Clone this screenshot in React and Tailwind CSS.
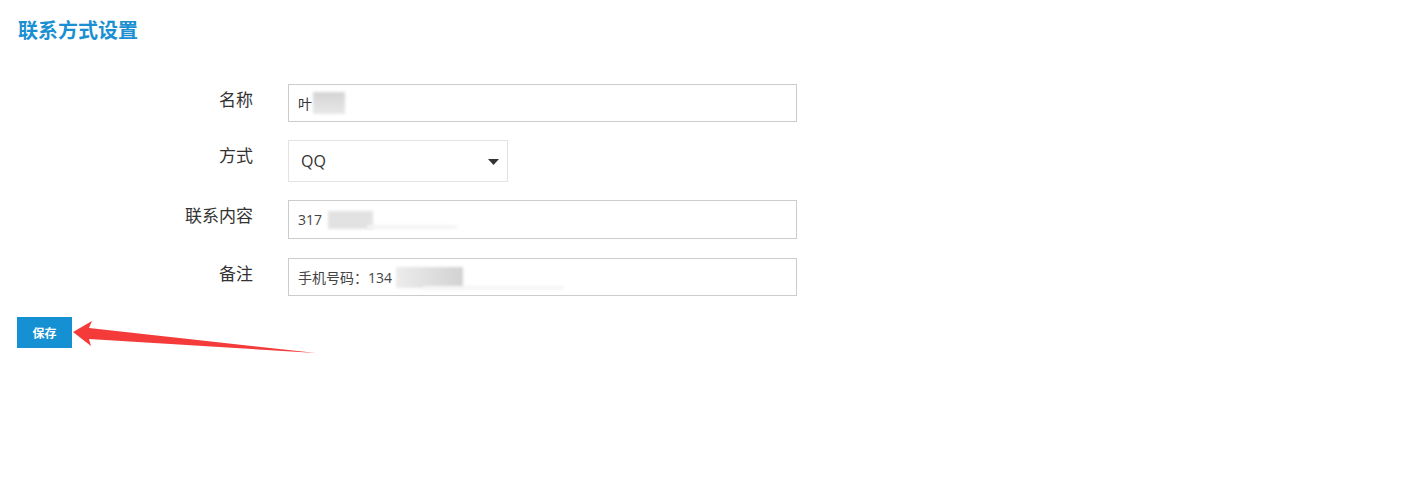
import React from "react";

const font = { fontFamily: '"Noto Sans CJK SC", "Open Sans", sans-serif' };

function Smudge({ className }) {
    return <span className={`inline-block align-middle blur-[1.5px] ${className}`} />;
}

function Row({ label, children, className = "" }) {
    return (
        <div className={`flex items-start ${className}`}>
            <div className="w-[253px] shrink-0 pt-[1px] text-right text-[17px] leading-[28px] text-[#333]">{label}</div>
            <div className="ml-[35px]">{children}</div>
        </div>
    );
}

export default function App() {
    return (
        <div className="relative min-h-[487px] w-[1418px] bg-white" style={font}>
            <div className="px-[18px] pt-[16px]">
                <h1 className="text-[20px] font-bold leading-[28px] text-[#1a8fd2]">联系方式设置</h1>
            </div>

            <div className="mt-[40px] flex flex-col">
                <Row label="名称">
                    <div className="flex h-[38px] w-[509px] items-center border border-[#cccccc] pl-[9px] text-[14px] text-[#333]">
                        <span>叶</span>
                        <Smudge className="ml-[1px] h-[22px] w-[32px] bg-gradient-to-b from-[#d4d4d4] to-[#e8e8e8]" />
                    </div>
                </Row>

                <Row label="方式" className="mt-[18px]">
                    <div className="flex h-[42px] w-[220px] items-center justify-between border border-[#e3e3e3] pl-[12px] pr-[8px] text-[16px] text-[#333]">
                        <span style={{ fontFamily: '"Open Sans", sans-serif' }}>QQ</span>
                        <svg width="11" height="6" viewBox="0 0 11 6" className="mt-[1px]">
                            <path d="M0 0 H11 L5.5 6 Z" fill="#333" />
                        </svg>
                    </div>
                </Row>

                <Row label="联系内容" className="mt-[18px]">
                    <div className="relative flex h-[39px] w-[509px] items-center border border-[#cccccc] pl-[9px] text-[14px] text-[#444]">
                        <span style={{ fontFamily: '"Open Sans", sans-serif' }}>317</span>
                        <Smudge className="ml-[6px] h-[18px] w-[45px] bg-[#e2e2e2]" />
                        <Smudge className="ml-[-6px] mt-[14px] h-[4px] w-[90px] bg-[#f4f4f4]" />
                    </div>
                </Row>

                <Row label="备注" className="mt-[19px]">
                    <div className="flex h-[38px] w-[509px] items-center border border-[#cccccc] pl-[9px] text-[14px] text-[#444]">
                        <span>手机号码：</span>
                        <span style={{ fontFamily: '"Open Sans", sans-serif' }}>134</span>
                        <Smudge className="ml-[4px] h-[21px] w-[67px] bg-gradient-to-r from-[#ececec] to-[#d2d2d2]" />
                        <Smudge className="ml-[-40px] mt-[22px] h-[4px] w-[140px] bg-[#f5f5f5]" />
                    </div>
                </Row>
            </div>

            <div className="mt-[21px] px-[17px]">
                <button className="h-[31px] w-[55px] bg-[#1590d3] text-[12px] font-bold text-white">保存</button>
            </div>

            <svg className="pointer-events-none absolute left-0 top-0" width="1418" height="487">
                <polygon points="73,332 92,321 89,328 316,353 89,339 91,346" fill="#f53a3a" />
            </svg>
        </div>
    );
}
